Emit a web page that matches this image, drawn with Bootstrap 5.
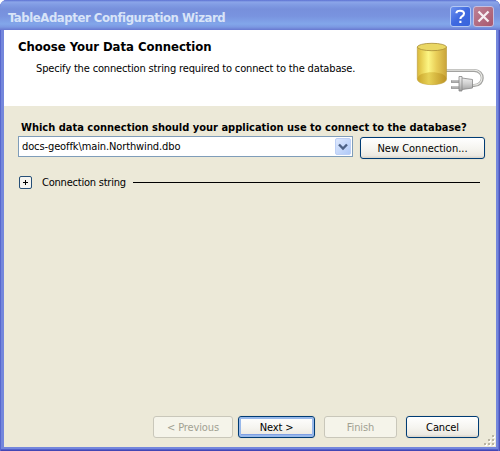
<!DOCTYPE html>
<html lang="en">
<head>
<meta charset="utf-8">
<title>TableAdapter Configuration Wizard</title>
<link href="https://cdn.jsdelivr.net/npm/bootstrap@5.3.0/dist/css/bootstrap.min.css" rel="stylesheet">
<style>
body{width:500px;height:451px;overflow:hidden;background:#fff;color:#000;font:11px/14px "DejaVu Sans Condensed","DejaVu Sans",sans-serif;font-stretch:condensed;white-space:nowrap}
.wizard{width:500px;height:451px;border-radius:7px 7px 0 0;background:#7487dc;padding:0 4px 4px;box-shadow:inset 1px 0 #5868ce,inset -1px 0 #4b50b8,inset -2px 0 #6070d2,inset 0 -1px #4346b4,inset 0 -2px #5360ca}
.titlebar{height:30px;margin:0 -4px;padding:4px 6px 0 8px;border-radius:7px 7px 0 0;background:linear-gradient(#5c70d2 0,#8ba5e9 2px,#809be3 5px,#7790dc 9px,#7993df 16px,#82a6ea 24px,#7b98e2 27px,#6878d0 30px)}
.caption{color:#d8e4f8;font-size:13px;line-height:27px;font-weight:700;letter-spacing:-.44px}
.cap-btn{width:21px;height:21px;margin-left:2px;margin-top:2px}
.banner{height:76px;background:#fff;padding:9px 11px 0 14px}
.heading{font-size:13px;line-height:16px;font-weight:700;margin:0;letter-spacing:-.04px}
.desc{margin:7px 0 0 18px;letter-spacing:-.155px}
.logo{margin-top:1px}
.pane{height:341px;background:#ece9d8;padding:15px 11px 0 14px}
.question{font-weight:700;margin-left:3px;height:15px}
.combo{width:335px;height:21px;border:1px solid #7f9db9;background:#fff;padding:1px}
.combo span{margin-left:2px;padding-top:1px;letter-spacing:-.11px}
.xp{height:22px;padding:1px 0 0;border:1px solid #003c74;border-radius:3px;background:linear-gradient(#fff,#f5f4ef 55%,#ece9e2 88%,#d8d2c8);font-size:11px;line-height:19px;color:#000;box-shadow:0 0 0 1px #e6e2d2;letter-spacing:-.12px}
.xp:disabled{border-color:#c9c7ba;background:#f5f4ea;color:#a1a192;opacity:1;box-shadow:none}
.xp.default{box-shadow:inset 0 0 0 2px #98b8ea,inset 0 -3px #7f9fe4,0 0 0 1px #e6e2d2}
.new{width:125px;margin:1px 0 0 7px;letter-spacing:0}
.prev{width:80px}
.next{width:77px;margin-left:5px}
.end{width:73px;margin-left:9px}
.details{margin:15px 0 0 1px}
.details span{margin-left:10px;padding-top:2px;letter-spacing:-.22px}
.rule{height:1px;background:#000;margin:0 5px 0 7px}
.actions{margin:0 6px 9px 135px}
.grip{right:5px;bottom:5px}
</style>
<script src="https://cdn.jsdelivr.net/npm/bootstrap@5.3.0/dist/js/bootstrap.bundle.min.js"></script>
</head>
<body>
<div class="wizard position-relative">
 <header class="titlebar d-flex">
  <span class="caption me-auto">TableAdapter Configuration Wizard</span>
  <svg class="cap-btn" viewBox="0 0 21 21"><defs><linearGradient id="blue" x2="1" y2="1"><stop stop-color="#6f93ee"/><stop offset=".5" stop-color="#3f69e0"/><stop offset="1" stop-color="#3764dc"/></linearGradient></defs><rect x=".5" y=".5" width="20" height="20" rx="2.5" fill="url(#blue)" stroke="#b4c8f3"/><path d="M6.500 7.200V6.500Q7 4.800 10 4.800Q14 4.800 14 7.600Q14 9.200 12 10.300Q10.400 11.200 10.400 13M10.400 14.800V17" fill="none" stroke="#fff" stroke-width="2.100"/></svg>
  <svg class="cap-btn" viewBox="0 0 21 21"><defs><linearGradient id="red" x2="1" y2="1"><stop stop-color="#bd8396"/><stop offset="1" stop-color="#a9566d"/></linearGradient></defs><rect x=".5" y=".5" width="20" height="20" rx="2.5" fill="url(#red)" stroke="#c5bfe0"/><path d="M5.500 5.500L15.500 15.500M15.500 5.500L5.500 15.500" stroke="#f6eef2" stroke-width="2.300"/></svg>
 </header>
 <section class="banner d-flex justify-content-between">
  <div>
   <h1 class="heading">Choose Your Data Connection</h1>
   <p class="desc">Specify the connection string required to connect to the database.</p>
  </div>
  <svg class="logo" width="70" height="56" viewBox="415 40 70 56">
   <defs>
    <linearGradient id="gold"><stop stop-color="#d8b83c"/><stop offset=".15" stop-color="#e9d155"/><stop offset=".38" stop-color="#fcf583"/><stop offset=".65" stop-color="#e9ce58"/><stop offset="1" stop-color="#c9a43a"/></linearGradient>
    <linearGradient id="base"><stop stop-color="#c69f26"/><stop offset=".4" stop-color="#dfc547"/><stop offset="1" stop-color="#b88d20"/></linearGradient>
    <linearGradient id="plug" x2="0" y2="1"><stop stop-color="#f4f4f4"/><stop offset=".5" stop-color="#cfcfcf"/><stop offset="1" stop-color="#9d9d9d"/></linearGradient>
   </defs>
   <path d="M446 70.500H474C485 70.500 485 85.500 474 85.500H471" fill="none" stroke="#a2a2a0" stroke-width="3"/>
   <path d="M446 70.200H474C484.600 70.200 484.600 85.200 474 85.200H471" fill="none" stroke="#e9e9e5" stroke-width="1.200"/>
   <path d="M417.300 47V79C417.300 86.500 446.500 86.500 446.500 79V47Z" fill="url(#gold)" stroke="#b99a38" stroke-width=".6"/>
   <path d="M417.600 78.500C417.600 70 446.200 70 446.200 78.500C446.200 86.500 417.600 86.500 417.600 78.500Z" fill="url(#base)" opacity=".75"/>
   <ellipse cx="431.900" cy="47" rx="14.600" ry="3.700" fill="#ead764" stroke="#a88d36" stroke-width=".8"/>
   <path d="M451 81.500H459M451 87.500H459" stroke="#858585" stroke-width="2.600"/>
   <path d="M451.500 81H459M451.500 87H459" stroke="#ddd"/>
   <path d="M459 76.500H462V78L472.500 79.500V88L462 89.500V91H459Z" fill="url(#plug)" stroke="#858585" stroke-width=".8"/>
   <path d="M462 78V89.500" stroke="#888" stroke-width=".8"/>
  </svg>
 </section>
 <main class="pane d-flex flex-column">
  <div class="question">Which data connection should your application use to connect to the database?</div>
  <div class="d-flex">
   <div class="combo d-flex align-items-center justify-content-between">
    <span>docs-geoffk\main.Northwind.dbo</span>
    <svg width="16" height="17" viewBox="0 0 16 17"><defs><linearGradient id="arrow" x2="1" y2="1"><stop stop-color="#e0eafe"/><stop offset="1" stop-color="#aec8f7"/></linearGradient></defs><rect x=".5" y=".5" width="15" height="16" rx="1.500" fill="url(#arrow)" stroke="#bdd0f6"/><path d="M4 6.500L8 10.500L12 6.500" fill="none" stroke="#4d6185" stroke-width="2.400"/></svg>
   </div>
   <button class="btn xp new">New Connection...</button>
  </div>
  <div class="details d-flex align-items-center">
   <svg width="13" height="13" viewBox="0 0 13 13"><rect x=".5" y=".5" width="12" height="12" rx="1.500" fill="#f6f5f0" stroke="#264f77"/><path d="M4 6.500H9M6.500 4V9" stroke="#000"/></svg>
   <span>Connection string</span><div class="rule flex-grow-1"></div>
  </div>
  <footer class="actions d-flex mt-auto">
   <button class="btn xp prev" disabled>&lt; Previous</button>
   <button class="btn xp default next">Next &gt;</button>
   <button class="btn xp end" disabled>Finish</button>
   <button class="btn xp end">Cancel</button>
  </footer>
 </main>
 <svg class="grip position-absolute" width="11" height="11" viewBox="0 0 11 11"><path d="M9 1h2v2h-2zM5 5h2v2H5zM9 5h2v2H9zM1 9h2v2H1zM5 9h2v2H5zM9 9h2v2H9z" fill="#fff"/><path d="M8 0h2v2H8zM4 4h2v2H4zM8 4h2v2H8zM0 8h2v2H0zM4 8h2v2H4zM8 8h2v2H8z" fill="#b8b4a3"/></svg>
</div>
</body>
</html>
